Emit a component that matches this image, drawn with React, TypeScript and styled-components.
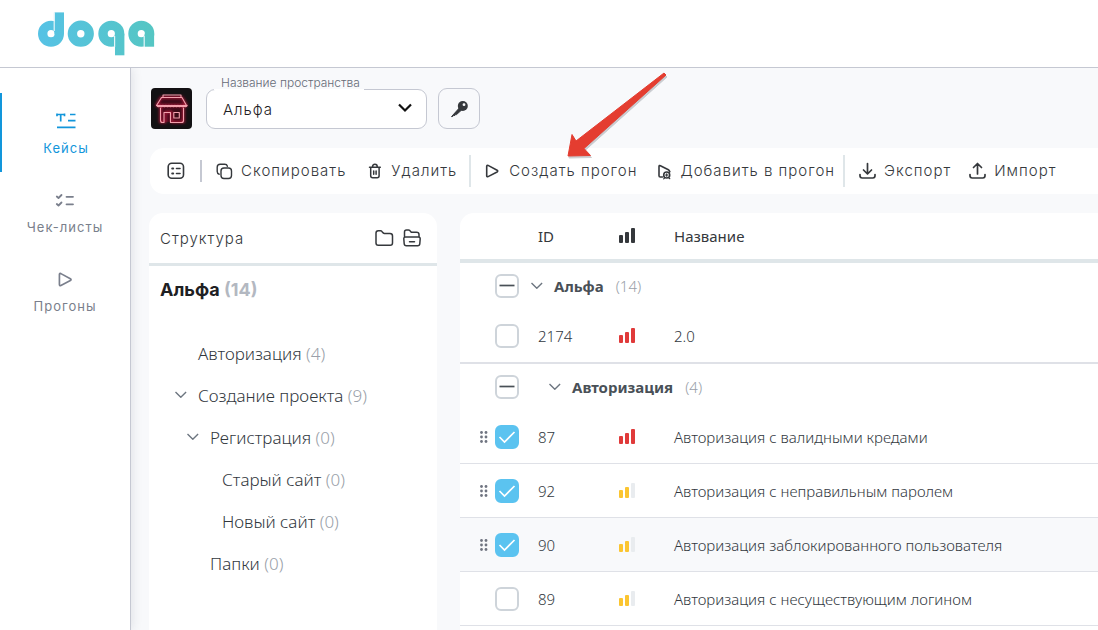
import React, { useState } from 'react';
import styled, { createGlobalStyle, css } from 'styled-components';

const color = {
  page: '#f8f9fb',
  line: '#c5c8d2',
  rule: '#dfe6e9',
  accent: '#1296db',
  ink: '#35383c',
  text: '#495057',
  data: '#32383e',
  muted: '#7a7f8c',
  count: '#b3b8c1',
  countLight: '#9a9fa9',
  check: '#5bc3f0',
};

const uiFont = 'Inter, "Liberation Sans", sans-serif';
const dataFont = '"Noto Sans", "Open Sans", sans-serif';

const GlobalStyle = createGlobalStyle`
  *, *::before, *::after { box-sizing: border-box; }
  body { margin: 0; background: ${color.page}; font-family: ${uiFont}; color: ${color.ink}; }
  button, select, input { font: inherit; color: inherit; letter-spacing: inherit; margin: 0; }
  button { background: none; border: 0; padding: 0; cursor: pointer; }
  svg { display: block; flex: none; }
`;

const Page = styled.div`
  display: flex;
  flex-direction: column;
  height: 100vh;
  overflow: hidden;
`;

const Header = styled.header`
  flex: none;
  height: 68px;
  padding: 12px 38px;
  background: #fff;
  border-bottom: 1px solid ${color.line};
`;

const Body = styled.div`
  flex: 1;
  display: flex;
  min-height: 0;
`;

const Sidebar = styled.nav`
  flex: none;
  display: flex;
  flex-direction: column;
  width: 131px;
  padding-top: 25px;
  background: #fff;
  border-right: 1px solid ${color.line};
  box-shadow: 1px 0 10px rgba(40, 50, 70, 0.12);
  clip-path: inset(0 -14px 0 0);
`;

const NavLink = styled.a<{ $active?: boolean }>`
  display: flex;
  flex-direction: column;
  align-items: center;
  gap: 8px;
  height: 79px;
  padding-top: 18px;
  border-left: ${p => (p.$active ? `2px solid ${color.accent}` : '0')};
  color: ${p => (p.$active ? color.accent : color.muted)};
  font-size: 13px;
  line-height: 18px;
  letter-spacing: 1px;
  text-decoration: none;
`;

const Main = styled.main`
  flex: 1;
  display: flex;
  flex-direction: column;
  min-width: 0;
  padding: 20px 0 0 18px;
`;

const SpaceRow = styled.div`
  display: flex;
  padding-left: 2px;
`;

const SelectBox = styled.div`
  position: relative;
  width: 221px;
  margin: 1px 11px 0 14px;
`;

const SpaceSelect = styled.select`
  appearance: none;
  width: 100%;
  height: 40px;
  padding: 0 40px 0 16px;
  border: 1px solid ${color.line};
  border-radius: 9px;
  background: #fff;
  color: #1e2023;
  font-size: 15px;
  font-weight: 300;
  letter-spacing: 1px;
  outline: none;
`;

const SelectLabel = styled.label`
  position: absolute;
  top: -14px;
  left: 8px;
  padding: 0 4px 0 7px;
  background: linear-gradient(${color.page} 14px, #fff 14px);
  color: #666b77;
  font-size: 12px;
  font-weight: 300;
  line-height: 15px;
  white-space: nowrap;
`;

const SelectArrow = styled.svg`
  position: absolute;
  top: 14px;
  right: 15px;
  pointer-events: none;
`;

const KeyButton = styled.button`
  display: grid;
  place-items: center;
  width: 42px;
  height: 41px;
  border: 1px solid ${color.line};
  border-radius: 9px;
`;

const Toolbar = styled.div`
  flex: none;
  display: flex;
  align-items: center;
  height: 46px;
  margin: 19px 0 19px 1px;
  padding-left: 17px;
  background: #fff;
  border-radius: 14px 0 0 14px;
`;

const Tool = styled.button<{ $gap?: number }>`
  display: flex;
  align-items: center;
  gap: 8px;
  margin-right: ${p => p.$gap ?? 12}px;
  font-size: 15px;
  font-weight: 300;
  line-height: 20px;
  letter-spacing: 1px;
  white-space: nowrap;
`;

const Separator = styled.span<{ $short?: boolean }>`
  flex: none;
  width: 2px;
  height: ${p => (p.$short ? 22 : 32)}px;
  margin-right: 14px;
  background: ${p => (p.$short ? color.line : color.rule)};
`;

const Panels = styled.div`
  flex: 1;
  display: flex;
  gap: 23px;
  min-height: 0;
`;

const TreePanel = styled.aside`
  flex: none;
  width: 288px;
  background: #fff;
  border-radius: 14px 14px 0 0;
`;

const TreeHeader = styled.div`
  display: flex;
  align-items: center;
  gap: 8px;
  height: 53px;
  padding: 0 15px 0 11px;
  border-bottom: 3px solid ${color.rule};
`;

const TreeHeading = styled.h2`
  flex: 1;
  margin: 0;
  font-size: 15px;
  font-weight: 300;
  letter-spacing: 1px;
`;

const TreeTitle = styled.h3`
  margin: 0 0 18px;
  padding: 12px 11px;
  color: #1e2023;
  font-size: 18px;
  font-weight: 700;
  line-height: 24px;
`;

const Count = styled.span`
  color: ${color.count};
`;

const TreeList = styled.ul`
  margin: 0;
  padding: 0;
  list-style: none;
`;

const TreeItem = styled.li<{ $level: number }>`
  display: flex;
  align-items: center;
  gap: 10px;
  height: 42px;
  padding-left: ${p => 25 + p.$level * 12}px;
  color: ${color.data};
  font-family: ${dataFont};
  font-size: 17px;
  font-weight: 300;
  white-space: nowrap;
  & ${Count} { color: ${color.countLight}; }
`;

const ChevronSlot = styled.button`
  width: 14px;
  height: 14px;
`;

const TablePanel = styled.section`
  flex: 1;
  min-width: 0;
  background: #fff;
  border-radius: 14px 0 0 0;
  overflow: hidden;
`;

const Table = styled.table`
  width: 100%;
  table-layout: fixed;
  border-collapse: separate;
  border-spacing: 0;
  color: ${color.data};
  font-family: ${dataFont};
  font-size: 15px;
  font-weight: 300;
  text-align: left;
`;

const cell = css`
  padding: 0;
  vertical-align: middle;
  white-space: nowrap;
`;

const HeadCell = styled.th<{ $width?: number; $inset?: boolean }>`
  ${cell}
  width: ${p => (p.$width ? `${p.$width}px` : 'auto')};
  height: 50px;
  padding-left: ${p => (p.$inset ? 8 : 0)}px;
  border-bottom: 4px solid ${color.rule};
  color: ${color.ink};
  font-weight: 400;
`;

const GroupRow = styled.tr`
  height: 46px;
`;

const CaseRow = styled.tr<{ $shade?: boolean; $end?: boolean }>`
  height: ${p => (p.$end ? 55 : 54)}px;
  background: ${p => (p.$shade ? color.page : '#fff')};
  & > td { border-bottom: ${p => (p.$end ? 2 : 1)}px solid #dfe1e7; }
`;

const Cell = styled.td<{ $inset?: boolean }>`
  ${cell}
  padding-left: ${p => (p.$inset ? 8 : 0)}px;
`;

const Pick = styled.div`
  display: grid;
  grid-template-columns: 7px 24px;
  align-items: center;
  gap: 8px;
  padding-left: 20px;
`;

const CheckFrame = styled.label`
  display: grid;
  grid-column: 2;
  width: 24px;
  height: 24px;
  place-items: center;
  & > * { grid-area: 1 / 1; }
  & > svg { pointer-events: none; }
`;

const CheckInput = styled.input`
  appearance: none;
  width: 24px;
  height: 24px;
  border: 2px solid #ced4da;
  border-radius: 6px;
  background: #fff;
  &:checked { background: ${color.check}; border-color: ${color.check}; }
`;

const GroupName = styled.div<{ $level: number }>`
  display: flex;
  align-items: center;
  gap: 10px;
  padding-left: ${p => p.$level * 18}px;
  color: ${color.text};
  font-weight: 700;
  & > ${Count} { margin-left: 2px; color: ${color.countLight}; font-weight: 300; }
`;

const Pointer = styled.svg`
  position: absolute;
  top: 68px;
  left: 562px;
  pointer-events: none;
`;

const line = { fill: 'none', stroke: 'currentColor', strokeLinecap: 'round', strokeLinejoin: 'round' } as const;

const Logo = () => (
  <svg width="118" height="45" viewBox="38 12 118 45" role="img" aria-label="doqa">
    <defs>
      <linearGradient id="brand" gradientUnits="userSpaceOnUse" x1="38" y1="0" x2="154" y2="0">
        <stop offset="0" stopColor="#56c2e5" />
        <stop offset="1" stopColor="#55c6c3" />
      </linearGradient>
    </defs>
    <g fill="none" stroke="url(#brand)" strokeWidth="9.4">
      <circle cx="51" cy="33.7" r="8.3" />
      <circle cx="80.8" cy="33.7" r="8.4" />
      <circle cx="111.3" cy="33.7" r="8.3" />
      <circle cx="141.3" cy="33.7" r="8.3" />
    </g>
    <g fill="url(#brand)">
      <rect x="54.6" y="12.4" width="9.4" height="21.6" />
      <rect x="115" y="33.7" width="9.4" height="21.6" />
      <rect x="144.7" y="33.7" width="9.4" height="13" />
    </g>
    <g stroke="#e6f6f9" strokeWidth="1.2">
      <path d="M54.2 12.4V31M114.6 36v11M144.2 36v11" />
    </g>
  </svg>
);

const ShopImage = () => (
  <svg width="41" height="41" viewBox="0 0 41 41" role="img" aria-label="Магазин">
    <defs>
      <filter id="glow" x="-30%" y="-30%" width="160%" height="160%">
        <feGaussianBlur stdDeviation="1.5" />
      </filter>
    </defs>
    <rect width="41" height="41" rx="4" fill="#131113" />
    <path d="M9 18h24v16H9zM11 8h20l4 9H6z" fill="#3a0a17" />
    <g {...line} stroke="#c81a41" strokeWidth="2" filter="url(#glow)">
      <path d="M10 9.500h21l4.500 8H5.500zM9.500 19v15M32.500 19v15" />
      <path d="M9.500 34h5V24h6v10h12" />
    </g>
    <g {...line} stroke="#f3a0ad" strokeWidth="1.1">
      <path d="M12 7h18M12 7v2M30 7v2M10.500 9.500h20.500l4.500 8H5.500z" />
      <path d="M6 17.500q1.500 2 3 0 1.500 2 3 0 1.500 2 3 0 1.500 2 3 0 1.500 2 3 0 1.500 2 3 0 1.500 2 3 0 1.500 2 3 0 1.500 2 3 0 1.500 2 3 0" strokeWidth="1.4" />
      <path d="M9.500 20v12.500q0 2 2 2h1.500V24.500h6.500v10h11q2 0 2-2V20" />
      <rect x="22.800" y="24.500" width="5.500" height="5.500" />
    </g>
  </svg>
);

const CasesIcon = () => (
  <svg width="20" height="20" viewBox="0 1 20 20" {...line} strokeLinecap="butt" strokeWidth="1.7">
    <path d="M1 4.500h7.500M4.700 4.500v7M1 3.600v2.600M8.500 3.600v2.600M14 4.500h5.500M12 10.700h7.500M1 17.300h18.500" />
  </svg>
);

const ChecklistIcon = () => (
  <svg width="20" height="20" viewBox="0 0 20 20" {...line} strokeWidth="1.8">
    <path d="M1.800 6.500l1.700 1.500 3-3M1.800 14l1.700 1.500 3-3M11.500 6.800H18M11.500 14.300H18" />
  </svg>
);

const PlayShape = 'M3.200 4.300v9.400q0 1.500 1.400.9l9-4.600q1.300-.9 0-1.800l-9-4.800q-1.400-.6-1.400.9z';

const RunsIcon = () => (
  <svg width="20" height="20" viewBox="-1 -1 19 19" {...line} strokeWidth="1.6">
    <path d={PlayShape} />
  </svg>
);

const PlayIcon = () => (
  <svg width="16" height="16" viewBox="1.500 1 16 16" {...line} strokeWidth="1.600">
    <path d={PlayShape} />
  </svg>
);

const AddRunIcon = () => (
  <svg width="15" height="18" viewBox="1 0 15 18" {...line} strokeWidth="1.600">
    <path d="M6.500 15H4.300q-1.300 0-1.300-1.300V4.500q0-1.500 1.400-.8l8 4q1 .6 1.100 1.500" />
    <circle cx="10.700" cy="13" r="3" />
    <path d="M9.500 13h2.400M10.700 11.800v2.400M8.500 16l-.8.800M13 16l.8.700M13.300 10.300l.7-.6" strokeWidth="1.200" />
  </svg>
);

const ListIcon = () => (
  <svg width="18" height="18" viewBox="0 0 18 18" {...line} strokeWidth="1.600">
    <rect x="1.200" y="1.200" width="15.300" height="15" rx="3.500" />
    <path d="M5.300 6.500h.8M5.300 11.500h.8" strokeWidth="2.200" />
    <path d="M9.500 6.500h3.500M9.500 11.500h3.500" />
  </svg>
);

const CopyIcon = () => (
  <svg width="17" height="17" viewBox="0 0 17 17" {...line} strokeWidth="1.400">
    <rect x="5" y="5" width="10.500" height="10.500" rx="3" />
    <path d="M3.200 11.200Q1.200 10.700 1.200 8.500V4.300q0-3 3-3h4.500q2.200 0 2.700 1.900" />
  </svg>
);

const TrashIcon = () => (
  <svg width="15" height="18" viewBox="0 0 15 18" {...line} strokeWidth="1.500">
    <path d="M1.500 5.300h10.800M4.500 5Q4.500 2.300 6.900 2.300T9.300 5M2.700 5.800v8q0 2 2 2h4.400q2 0 2-2v-8M5.700 9v3.200M8.100 9v3.200" />
  </svg>
);

const TransferIcon = ({ up }: { up?: boolean }) => (
  <svg width="17" height="18" viewBox="0.500 0 17 18" {...line} strokeWidth="1.700">
    <path d="M1.500 12.500v1.300q0 2.200 2.200 2.200h10.600q2.200 0 2.200-2.200v-1.300" />
    <path d={up ? 'M9 12V1.500M5 5.500l4-4 4 4' : 'M9 1.500v10.300M5 8l4 4 4-4'} />
  </svg>
);

const KeyIcon = () => (
  <svg width="20" height="20" viewBox="0 0 20 20" fill={color.ink}>
    <path d="M2.500 17.600l7.800-8.600 2.200 2.100-5 4.500-1.100-.1-.5 1-1.200-.1-1 1.100z" stroke={color.ink} strokeLinejoin="round" />
    <circle cx="13.800" cy="7" r="5" />
    <circle cx="15" cy="5.700" r="1.400" fill={color.page} />
  </svg>
);

const FolderIcon = () => (
  <svg width="20" height="20" viewBox="0 0 20 20" {...line} strokeWidth="1.500">
    <path d="M2 15V5q0-2.300 2.300-2.300h2.200q.9 0 1.400.7l1.300 1.500q.5.500 1.200.5h5.600q2.500 0 2.500 2.500V15q0 2.300-2.300 2.300H4.300Q2 17.300 2 15z" />
  </svg>
);

const FolderMinusIcon = () => (
  <svg width="20" height="20" viewBox="0 0 20 20" {...line} strokeWidth="1.500">
    <path d="M2.500 8.500V4q0-2 2-2h2q.8 0 1.300.6l1 1.100q.5.600 1.200.6h4.500q2.500 0 2.500 2.200v2" />
    <path d="M3.500 9h13q1.700 0 1.700 1.800l-.4 5q-.2 2-2.100 2H4.300q-1.900 0-2.100-2l-.4-5Q1.800 9 3.500 9zM7.500 13.700h5" />
  </svg>
);

const Chevron = () => (
  <svg width="14" height="14" viewBox="0 0 14 14" {...line} strokeLinecap="butt" stroke="#6d7680" strokeWidth="1.400">
    <path d="M1.500 4l5.300 5.200L12.100 4" />
  </svg>
);

const GripIcon = () => (
  <svg width="8" height="12" viewBox="0 0 8 12" fill="#6f7480">
    {[1.5, 6, 10.5].map(y => [1.5, 6].map(x => <circle key={`${x}-${y}`} cx={x} cy={y} r="1.400" />))}
  </svg>
);

const Bars = ({ fill, level = 3 }: { fill: string; level?: number }) => (
  <svg width="16" height="16" viewBox="0 0 16 16">
    {[[0, 7, 8], [6, 4, 11], [12, 0, 15]].map(([x, y, h], i) => (
      <rect key={x} x={x} y={y} width="4" height={h} rx="1" fill={i < level ? fill : '#e9ecef'} />
    ))}
  </svg>
);

const Checkbox = ({ name, initial, partial }: { name: string; initial?: boolean; partial?: boolean }) => {
  const [on, setOn] = useState(!!initial);
  return (
    <CheckFrame>
      <CheckInput type="checkbox" aria-label={name} checked={on} onChange={() => setOn(!on)} />
      {(on || partial) && (
        <svg width="24" height="24" viewBox="0 0 24 24" fill="none" strokeWidth="1.700" stroke={on ? '#fff' : color.text}>
          <path d={on ? 'M4.500 12l5 5L19.500 7' : 'M4.500 11.500h15'} />
        </svg>
      )}
    </CheckFrame>
  );
};

const tree = [
  { name: 'Авторизация', count: 4, level: 0 },
  { name: 'Создание проекта', count: 9, level: 0, open: true },
  { name: 'Регистрация', count: 0, level: 1, open: true },
  { name: 'Старый сайт', count: 0, level: 2 },
  { name: 'Новый сайт', count: 0, level: 2 },
  { name: 'Папки', count: 0, level: 1 },
];

type Case = { id: number; name: string; high?: boolean; picked?: boolean; shade?: boolean };

const groups: { name: string; count: number; cases: Case[] }[] = [
  { name: 'Альфа', count: 14, cases: [{ id: 2174, name: '2.0', high: true }] },
  {
    name: 'Авторизация',
    count: 4,
    cases: [
      { id: 87, name: 'Авторизация с валидными кредами', high: true, picked: true },
      { id: 92, name: 'Авторизация с неправильным паролем', picked: true },
      { id: 90, name: 'Авторизация заблокированного пользователя', picked: true, shade: true },
      { id: 89, name: 'Авторизация с несуществующим логином' },
    ],
  },
];

export default function App() {
  return (
    <Page>
      <GlobalStyle />
      <Header>
        <Logo />
      </Header>
      <Body>
        <Sidebar>
          <NavLink href="#cases" $active><CasesIcon />Кейсы</NavLink>
          <NavLink href="#checklists"><ChecklistIcon />Чек-листы</NavLink>
          <NavLink href="#runs"><RunsIcon />Прогоны</NavLink>
        </Sidebar>
        <Main>
          <SpaceRow>
            <ShopImage />
            <SelectBox>
              <SpaceSelect id="space" defaultValue="alpha">
                <option value="alpha">Альфа</option>
              </SpaceSelect>
              <SelectLabel htmlFor="space">Название пространства</SelectLabel>
              <SelectArrow width="14" height="10" viewBox="0 0 14 10" fill="none" stroke="#111" strokeWidth="2.200">
                <path d="M1 1.500l6 6 6-6" />
              </SelectArrow>
            </SelectBox>
            <KeyButton aria-label="Ключ"><KeyIcon /></KeyButton>
          </SpaceRow>
          <Toolbar>
            <Tool aria-label="Список" $gap={15}><ListIcon /></Tool>
            <Separator $short />
            <Tool $gap={22}><CopyIcon />Скопировать</Tool>
            <Tool><TrashIcon />Удалить</Tool>
            <Separator />
            <Tool $gap={20}><PlayIcon />Создать прогон</Tool>
            <Tool $gap={8}><AddRunIcon />Добавить в прогон</Tool>
            <Separator />
            <Tool $gap={18}><TransferIcon />Экспорт</Tool>
            <Tool><TransferIcon up />Импорт</Tool>
          </Toolbar>
          <Panels>
            <TreePanel>
              <TreeHeader>
                <TreeHeading>Структура</TreeHeading>
                <button aria-label="Новая папка"><FolderIcon /></button>
                <button aria-label="Свернуть папки"><FolderMinusIcon /></button>
              </TreeHeader>
              <TreeTitle>Альфа <Count>(14)</Count></TreeTitle>
              <TreeList>
                {tree.map(t => (
                  <TreeItem key={t.name} $level={t.level}>
                    {t.open ? <ChevronSlot aria-label="Свернуть"><Chevron /></ChevronSlot> : <ChevronSlot as="span" />}
                    <span>{t.name} <Count>({t.count})</Count></span>
                  </TreeItem>
                ))}
              </TreeList>
            </TreePanel>
            <TablePanel>
              <Table>
                <thead>
                  <tr>
                    <HeadCell $width={70} />
                    <HeadCell $width={89} $inset>ID</HeadCell>
                    <HeadCell $width={55}><Bars fill={color.ink} /></HeadCell>
                    <HeadCell>Название</HeadCell>
                  </tr>
                </thead>
                {groups.map((g, i) => (
                  <tbody key={g.name}>
                    <GroupRow>
                      <Cell><Pick><Checkbox name={g.name} partial /></Pick></Cell>
                      <Cell colSpan={3}>
                        <GroupName $level={i}>
                          <ChevronSlot aria-label="Свернуть"><Chevron /></ChevronSlot>
                          {g.name}
                          <Count>({g.count})</Count>
                        </GroupName>
                      </Cell>
                    </GroupRow>
                    {g.cases.map(c => (
                      <CaseRow key={c.id} $shade={c.shade} $end={i === 0}>
                        <Cell><Pick>{c.picked && <GripIcon />}<Checkbox name={c.name} initial={c.picked} /></Pick></Cell>
                        <Cell $inset>{c.id}</Cell>
                        <Cell><Bars fill={c.high ? '#e03a3a' : '#fbc531'} level={c.high ? 3 : 2} /></Cell>
                        <Cell>{c.name}</Cell>
                      </CaseRow>
                    ))}
                  </tbody>
                ))}
              </Table>
            </TablePanel>
          </Panels>
        </Main>
      </Body>
      <Pointer width="110" height="94" viewBox="562 68 110 94">
        <path d="M664 73L576 141L572 134.500L568 156L590.500 155.500L584 148.500L666 75Z" fill="#9a9da3" stroke="#9a9da3" strokeLinejoin="round" opacity=".5" transform="translate(1 2)" />
        <path d="M664 73L576 141L572 134.500L568 156L590.500 155.500L584 148.500L666 75Z" fill="#e43d30" stroke="#e43d30" strokeLinejoin="round" />
      </Pointer>
    </Page>
  );
}
